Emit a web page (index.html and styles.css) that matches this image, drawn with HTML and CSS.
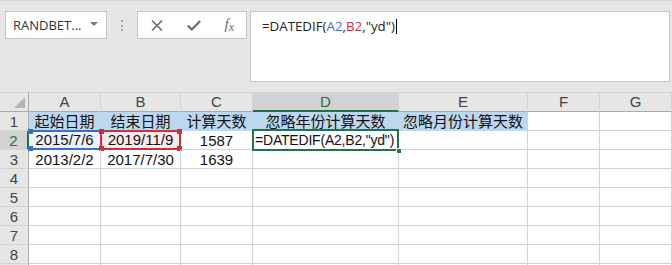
FILE: index.html
```html
<!DOCTYPE html>
<html>
<head>
  <link rel="stylesheet" href="styles.css">
</head>
<body>
  <!-- Formula bar -->
  <div class="topbar">
    <div class="namebox">
      <span>RANDBET...</span>
      <span class="dropdown"></span>
    </div>
    <div class="grip"><i></i><i></i><i></i></div>
    <div class="fn-buttons">
      <svg width="12" height="11" viewBox="0 0 12 11">
        <path d="M1 0.5 L11 10.5 M11 0.5 L1 10.5" stroke="#6d6d6d" stroke-width="1.6" fill="none"/>
      </svg>
      <svg width="14" height="11" viewBox="0 0 14 11">
        <path d="M0.8 5.5 L4.8 9.5 L13.2 1" stroke="#6d6d6d" stroke-width="2.2" fill="none"/>
      </svg>
      <span class="fx">f<span class="fx-x">x</span></span>
    </div>
    <div class="formula">
      =DATEDIF(<span class="ref-a">A2</span>,<span class="ref-b">B2</span>,"yd")<span class="cursor"></span>
    </div>
  </div>

  <!-- Worksheet -->
  <div class="sheet">
    <div class="hdr corner"><span class="corner-tri"></span></div>
    <div class="hdr">A</div>
    <div class="hdr">B</div>
    <div class="hdr">C</div>
    <div class="hdr active-col">D</div>
    <div class="hdr">E</div>
    <div class="hdr">F</div>
    <div class="hdr">G</div>

    <div class="rh">1</div>
    <div class="cell fill">起始日期</div>
    <div class="cell fill">结束日期</div>
    <div class="cell fill">计算天数</div>
    <div class="cell fill">忽略年份计算天数</div>
    <div class="cell fill">忽略月份计算天数</div>
    <div class="cell"></div>
    <div class="cell"></div>

    <div class="rh active-row">2</div>
    <div class="cell ref-blue">2015/7/6<i class="sq tl"></i><i class="sq bl"></i></div>
    <div class="cell ref-red">2019/11/9<i class="sq tl"></i><i class="sq tr"></i><i class="sq bl"></i><i class="sq br"></i></div>
    <div class="cell">1587</div>
    <div class="cell active-cell">=DATEDIF(A2,B2,"yd")<i class="handle"></i></div>
    <div class="cell"></div>
    <div class="cell"></div>
    <div class="cell"></div>

    <div class="rh">3</div>
    <div class="cell">2013/2/2</div>
    <div class="cell">2017/7/30</div>
    <div class="cell">1639</div>
    <div class="cell"></div>
    <div class="cell"></div>
    <div class="cell"></div>
    <div class="cell"></div>

    <div class="rh">4</div>
    <div class="cell"></div><div class="cell"></div><div class="cell"></div><div class="cell"></div><div class="cell"></div><div class="cell"></div><div class="cell"></div>
    <div class="rh">5</div>
    <div class="cell"></div><div class="cell"></div><div class="cell"></div><div class="cell"></div><div class="cell"></div><div class="cell"></div><div class="cell"></div>
    <div class="rh">6</div>
    <div class="cell"></div><div class="cell"></div><div class="cell"></div><div class="cell"></div><div class="cell"></div><div class="cell"></div><div class="cell"></div>
    <div class="rh">7</div>
    <div class="cell"></div><div class="cell"></div><div class="cell"></div><div class="cell"></div><div class="cell"></div><div class="cell"></div><div class="cell"></div>
    <div class="rh">8</div>
    <div class="cell"></div><div class="cell"></div><div class="cell"></div><div class="cell"></div><div class="cell"></div><div class="cell"></div><div class="cell"></div>
    <div class="rh cut"></div>
    <div class="cell cut"></div><div class="cell cut"></div><div class="cell cut"></div><div class="cell cut"></div><div class="cell cut"></div><div class="cell cut"></div><div class="cell cut"></div>
  </div>
</body>
</html>
```

FILE: styles.css
```css
* {
  box-sizing: border-box;
}

body {
  margin: 0;
  width: 672px;
  height: 265px;
  overflow: hidden;
  background: #e6e6e6;
  font-family: 'Liberation Sans', 'Noto Sans CJK SC', sans-serif;
}

/* Formula bar */
.topbar {
  display: flex;
  align-items: flex-start;
  height: 92px;
  padding-top: 10px;
  border-top: 1px solid #d4d4d4;
}

.namebox {
  display: flex;
  align-items: center;
  justify-content: space-between;
  margin-left: 5px;
  width: 102px;
  height: 28px;
  padding: 0 8px 0 7px;
  background: #fff;
  border: 1px solid #c6c6c6;
  font-family: 'Open Sans', sans-serif;
  font-size: 13px;
  color: #333;
}

.dropdown {
  width: 0;
  height: 0;
  border-left: 4px solid transparent;
  border-right: 4px solid transparent;
  border-top: 4px solid #777;
  margin-top: -2px;
}

.grip {
  display: flex;
  flex-direction: column;
  gap: 2.5px;
  margin: 9px 14px 0 14px;
}

.grip i {
  display: block;
  width: 2px;
  height: 2px;
  background: #a6a6a6;
}

.fn-buttons {
  display: flex;
  align-items: center;
  justify-content: space-between;
  width: 110px;
  height: 28px;
  padding: 0 12px 0 13px;
  background: #fff;
  border: 1px solid #c6c6c6;
}

.fx {
  font-family: 'Liberation Serif', serif;
  font-style: italic;
  font-size: 15px;
  color: #6d6d6d;
  margin-top: -2px;
}

.fx-x {
  font-size: 12px;
  position: relative;
  top: 2px;
}

.formula {
  flex: 1;
  height: 71px;
  margin: 0 2px 0 3px;
  padding: 5px 0 0 11px;
  background: #fff;
  border: 1px solid #c6c6c6;
  font-family: 'Open Sans', sans-serif;
  font-size: 13.3px;
  color: #222;
  white-space: nowrap;
}

.ref-a {
  color: #3c6fc4;
}

.ref-b {
  color: #c8323e;
}

.cursor {
  display: inline-block;
  width: 1px;
  height: 15px;
  margin-left: 1px;
  vertical-align: -3px;
  background: #000;
}

/* Worksheet grid */
.sheet {
  display: grid;
  grid-template-columns: 29px 72px 80px 72px 146px 129px 72px 72px;
  grid-template-rows: 20px repeat(8, 19px) 1px;
  background: #fff;
  font-size: 15px;
}

.hdr {
  position: relative;
  background: #e6e6e6;
  border-top: 1px solid #d4d4d4;
  border-right: 1px solid #d4d4d4;
  border-bottom: 1px solid #ababab;
  text-align: center;
  line-height: 18px;
  color: #444;
}

.hdr.active-col {
  background: #d2d2d2;
  border-bottom: 2px solid #217346;
  color: #217346;
}

.corner {
  border-right-color: #ababab;
}

.corner-tri {
  position: absolute;
  right: 3px;
  bottom: 3px;
  width: 0;
  height: 0;
  border-left: 11px solid transparent;
  border-bottom: 11px solid #b4b4b4;
}

.rh {
  background: #e6e6e6;
  border-right: 1px solid #ababab;
  border-bottom: 1px solid #d4d4d4;
  text-align: center;
  line-height: 19px;
  color: #444;
}

.rh.active-row {
  background: #d2d2d2;
  border-right: 2px solid #217346;
  color: #217346;
}

.cell {
  position: relative;
  border-right: 1px solid #d4d4d4;
  border-bottom: 1px solid #d4d4d4;
  text-align: center;
  line-height: 19px;
  color: #111;
  white-space: nowrap;
}

.cut {
  border-bottom: 0;
}

.cell.fill {
  background: #bdd7ee;
  border-color: #bdd7ee;
}

/* Reference highlights */
.ref-blue {
  background: #eef3fa;
  border-top: 2px solid #3c6fc4;
  border-bottom: 2px solid #3c6fc4;
  margin-top: -1px;
  line-height: 16px;
}

.ref-red {
  background: #fbeaeb;
  border: 2px solid #c8323e;
  margin: -1px 0 0 -1px;
  line-height: 16px;
}

.sq {
  position: absolute;
  width: 5px;
  height: 5px;
}

.ref-blue .sq {
  background: #3c6fc4;
  left: -1px;
}

.ref-red .sq {
  background: #c8323e;
}

.ref-blue .tl { top: -3px; }
.ref-blue .bl { bottom: -3px; }
.ref-red .tl { top: -3px; left: -3px; }
.ref-red .tr { top: -3px; right: -3px; }
.ref-red .bl { bottom: -3px; left: -3px; }
.ref-red .br { bottom: -3px; right: -3px; }

.active-cell {
  text-align: left;
  padding-left: 2px;
  font-size: 14px;
  letter-spacing: -0.2px;
  overflow: visible;
  z-index: 1;
}

.active-cell::after {
  content: '';
  position: absolute;
  left: -1px;
  top: -2px;
  right: -1px;
  bottom: -2px;
  border: 2px solid #217346;
}

.handle {
  position: absolute;
  right: -4px;
  bottom: -5px;
  width: 6px;
  height: 6px;
  background: #217346;
  border: 1px solid #fff;
  z-index: 2;
}
```
